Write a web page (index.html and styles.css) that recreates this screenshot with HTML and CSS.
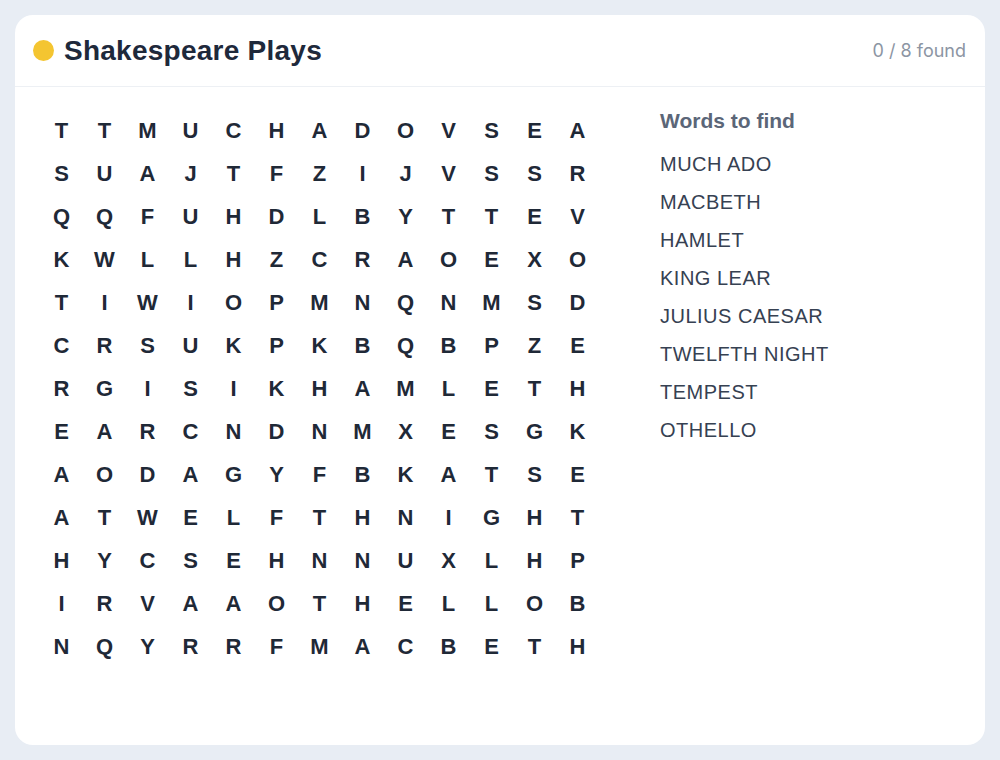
FILE: index.html
```html
<!DOCTYPE html>
<html lang="en">
<head>
    <meta charset="UTF-8">
    <meta name="viewport" content="width=device-width, initial-scale=1.0">
    <title>Shakespeare Plays</title>
    <link rel="stylesheet" href="styles.css">
</head>
<body>
    <div class="card">
        <div class="card-header">
            <div class="title">
                <span class="dot"></span>
                <h1>Shakespeare Plays</h1>
            </div>
            <div class="count" id="count">0 / 8 found</div>
        </div>

        <div class="card-body">
            <div class="grid" id="grid"></div>

            <div class="words">
                <h2>Words to find</h2>
                <ul id="wordList"></ul>
            </div>
        </div>
    </div>

    <script>
        const rows = [
            "TTMUCHADOVSEA",
            "SUAJTFZIJVSSR",
            "QQFUHDLBYTTEV",
            "KWLLHZCRAOEXO",
            "TIWIOPMNQNMSD",
            "CRSUKPKBQBPZE",
            "RGISIKHAMLETH",
            "EARCNDNMXESGK",
            "AODAGYFBKATSE",
            "ATWELFTHNIGHT",
            "HYCSEHNNUXLHP",
            "IRVAAOTHELLOB",
            "NQYRRFMACBETH"
        ];

        const words = [
            "MUCH ADO", "MACBETH", "HAMLET", "KING LEAR",
            "JULIUS CAESAR", "TWELFTH NIGHT", "TEMPEST", "OTHELLO"
        ];

        const grid = document.getElementById("grid");
        rows.forEach(row => {
            for (const ch of row) {
                const cell = document.createElement("div");
                cell.className = "cell";
                cell.textContent = ch;
                grid.appendChild(cell);
            }
        });

        const wordList = document.getElementById("wordList");
        words.forEach(w => {
            const li = document.createElement("li");
            li.textContent = w;
            wordList.appendChild(li);
        });
    </script>
</body>
</html>
```

FILE: styles.css
```css
body {
    margin: 0;
    padding: 15px;
    background-color: #e8edf4;
    font-family: 'Liberation Sans', Arial, sans-serif;
}

.card {
    background-color: #ffffff;
    border-radius: 18px;
    height: 730px;
    box-sizing: border-box;
}

.card-header {
    display: flex;
    justify-content: space-between;
    align-items: center;
    height: 71px;
    padding: 0 19px 0 18px;
    border-bottom: 1px solid #edf0f4;
}

.title {
    display: flex;
    align-items: center;
    gap: 10px;
}

.dot {
    width: 21px;
    height: 21px;
    border-radius: 50%;
    background-color: #f4c531;
}

h1 {
    margin: 0;
    font-size: 28px;
    font-weight: 700;
    letter-spacing: 0.25px;
    color: #1e293b;
}

.count {
    font-family: 'Inter', sans-serif;
    font-size: 18px;
    color: #8c95a3;
}

.card-body {
    display: flex;
    padding: 22px 0 0 25px;
}

.grid {
    display: grid;
    grid-template-columns: repeat(13, 43px);
    grid-auto-rows: 43px;
}

.cell {
    display: flex;
    align-items: center;
    justify-content: center;
    font-size: 22px;
    font-weight: 700;
    color: #1f2937;
}

.words {
    margin-left: 61px;
}

.words h2 {
    margin: 0;
    font-size: 21px;
    font-weight: 700;
    color: #5b6678;
    line-height: 24px;
}

.words ul {
    list-style: none;
    margin: 12px 0 0;
    padding: 0;
}

.words li {
    font-size: 20px;
    letter-spacing: 0.5px;
    line-height: 38px;
    color: #364152;
}
```
